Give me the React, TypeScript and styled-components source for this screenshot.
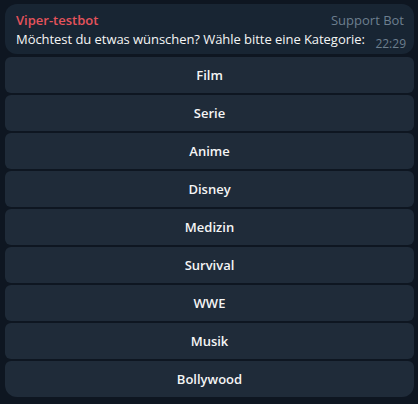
import styled, { createGlobalStyle } from "styled-components";

const categories = [
  "Film",
  "Serie",
  "Anime",
  "Disney",
  "Medizin",
  "Survival",
  "WWE",
  "Musik",
  "Bollywood",
];

// COLORS
const colors = {
  background: "#0e1621",
  bubble: "#182533",
  button: "#1f2b39",
  text: "#f5f5f5",
  name: "#e5535c",
  muted: "#6d7f8f",
};

function App() {
  return (
    <>
      <GlobalStyle />
      <Chat>
        <Bubble>
          <Header>
            <Name>Viper-testbot</Name>
            <Badge>Support Bot</Badge>
          </Header>
          <MessageRow>
            <Text>Möchtest du etwas wünschen? Wähle bitte eine Kategorie:</Text>
            <Time>22:29</Time>
          </MessageRow>
        </Bubble>
        <Keyboard>
          {categories.map((category, index) => (
            <KeyButton key={category} $last={index === categories.length - 1}>
              {category}
            </KeyButton>
          ))}
        </Keyboard>
      </Chat>
    </>
  );
}

// STYLED COMPONENTS
const GlobalStyle = createGlobalStyle`
  html, body {
    margin: 0;
    background: ${colors.background};
    font-family: "Open Sans", "Noto Sans", sans-serif;
  }
`;

const Chat = styled.div`
  display: flex;
  flex-direction: column;
  gap: 3px;
  padding: 4px 4px 4px 5px;
  width: 409px;
`;

const Bubble = styled.div`
  background: ${colors.bubble};
  border-radius: 12px;
  padding: 7px 8px 5px 11px;
  display: flex;
  flex-direction: column;
`;

const Header = styled.div`
  display: flex;
  justify-content: space-between;
  align-items: center;
  height: 18px;
`;

const Name = styled.span`
  color: ${colors.name};
  font-size: 13px;
  font-weight: 600;
`;

const Badge = styled.span`
  color: ${colors.muted};
  font-size: 13px;
  margin-right: 2px;
`;

const MessageRow = styled.div`
  display: flex;
  justify-content: space-between;
  align-items: flex-end;
`;

const Text = styled.span`
  color: ${colors.text};
  font-size: 13px;
  line-height: 20px;
  letter-spacing: -0.05px;
`;

const Time = styled.span`
  color: ${colors.muted};
  font-size: 12px;
  line-height: 16px;
  margin-bottom: -3px;
`;

const Keyboard = styled.div`
  display: flex;
  flex-direction: column;
  gap: 2px;
`;

const KeyButton = styled.div<{ $last?: boolean }>`
  background: ${colors.button};
  border-radius: ${(props) => (props.$last ? "6px 6px 12px 12px" : "6px")};
  color: ${colors.text};
  font-size: 13px;
  font-weight: 600;
  height: 36px;
  display: flex;
  align-items: center;
  justify-content: center;
`;

export default App;
